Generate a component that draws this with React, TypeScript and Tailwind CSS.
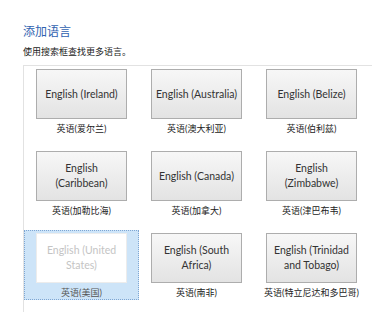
import React from 'react'

type Lang = { name: string; label: string }

const langs: Lang[] = [
  { name: 'English (Ireland)', label: '英语(爱尔兰)' },
  { name: 'English (Australia)', label: '英语(澳大利亚)' },
  { name: 'English (Belize)', label: '英语(伯利兹)' },
  { name: 'English (Caribbean)', label: '英语(加勒比海)' },
  { name: 'English (Canada)', label: '英语(加拿大)' },
  { name: 'English (Zimbabwe)', label: '英语(津巴布韦)' },
  { name: 'English (United States)', label: '英语(美国)' },
  { name: 'English (South Africa)', label: '英语(南非)' },
  { name: 'English (Trinidad and Tobago)', label: '英语(特立尼达和多巴哥)' },
]

const font = "font-['Segoe_UI','Lato','Noto_Sans_CJK_SC',sans-serif]"

function LangTile({ lang, selected }: { lang: Lang; selected?: boolean }) {
  return (
    <div
      className={
        selected
          ? 'flex h-[70px] flex-col items-center border border-dotted border-[#7ea6d3] bg-[#cde4f8] pt-[2px]'
          : 'flex h-[70px] flex-col items-center border border-transparent pt-[2px]'
      }
    >
      <div
        className={
          selected
            ? 'flex h-[51px] w-[91px] items-center justify-center border border-[#ececec] bg-white px-[1px] text-center text-[10.5px] leading-[15px] text-[#c4c4c4]'
            : 'flex h-[51px] w-[91px] items-center justify-center border border-[#adadad] bg-linear-to-b from-[#f7f7f7] to-[#e3e3e3] px-[1px] text-center text-[10.5px] leading-[15px] text-[#333]'
        }
      >
        <span className={lang.name.length > 20 ? 'px-[5px]' : ''}>{lang.name}</span>
      </div>
      <div
        className={
          selected
            ? 'mt-[4px] whitespace-nowrap text-[9px] leading-[12px] text-[#555]'
            : 'mt-[4px] whitespace-nowrap text-[9px] leading-[12px] text-[#222]'
        }
      >
        {lang.label}
      </div>
    </div>
  )
}

export default function App() {
  return (
    <div className={`h-[312px] w-[372px] overflow-hidden bg-white ${font}`}>
      <div className="pl-[23px] pt-[24px]">
        <h1 className="text-[12px] leading-[16px] text-[#2f62b0]">添加语言</h1>
        <p className="mt-[6px] text-[9px] leading-[12px] text-[#1a1a1a]">
          使用搜索框查找更多语言。
        </p>
        <div className="mt-[7px] h-[300px] border-l border-t border-[#e2e2e2]">
          <div className="grid grid-cols-[115px_115px_115px] gap-y-[12px]">
            {langs.map((l, i) => (
              <LangTile key={l.name} lang={l} selected={i === 6} />
            ))}
          </div>
        </div>
      </div>
    </div>
  )
}
